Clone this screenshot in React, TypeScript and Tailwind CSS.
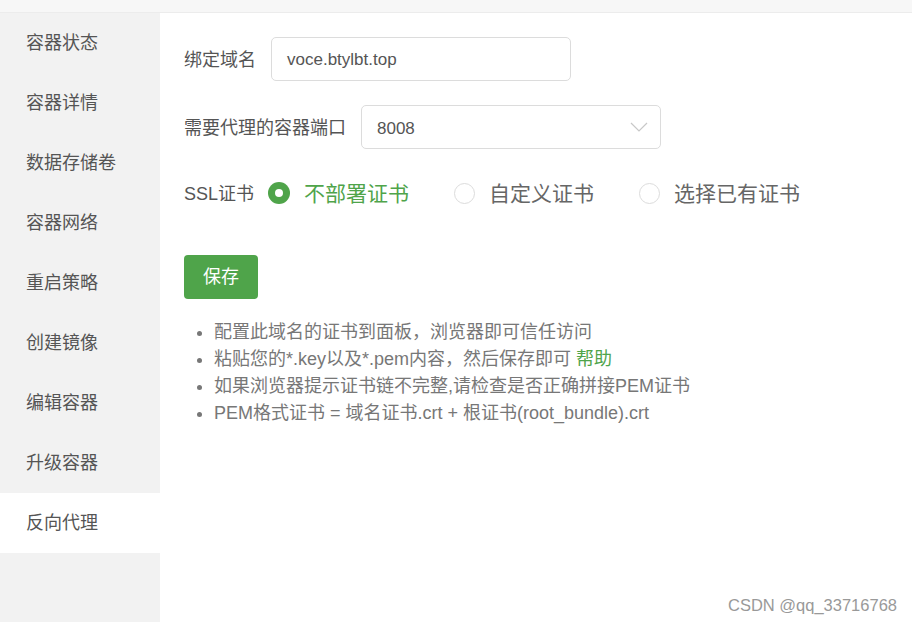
import React from "react";

const font = { fontFamily: '"Liberation Sans", "Noto Sans CJK SC", sans-serif' };

const items = ["容器状态", "容器详情", "数据存储卷", "容器网络", "重启策略", "创建镜像", "编辑容器", "升级容器", "反向代理"];

function Radio({ checked, label }: { checked?: boolean; label: string }) {
  return (
    <div className="flex items-center">
      {checked ? (
        <span className="w-[22px] h-[22px] rounded-full bg-[#4fa44a] flex items-center justify-center">
          <span className="w-[8px] h-[8px] rounded-full bg-white" />
        </span>
      ) : (
        <span className="w-[21px] h-[21px] rounded-full border border-[#dcdcdc] bg-white" />
      )}
      <span className={`ml-[14px] text-[21px] pt-[2px] ${checked ? "text-[#4fa44a]" : "text-[#666]"}`}>{label}</span>
    </div>
  );
}

export default function App() {
  return (
    <div className="w-[912px] h-[622px] bg-white flex flex-col overflow-hidden relative" style={font}>
      <div className="h-[13px] bg-[#f7f7f7] border-b border-[#ececec] shrink-0" />
      <div className="flex flex-1">
        <div className="w-[160px] bg-[#f2f2f2] flex flex-col">
          {items.map((t) => (
            <div
              key={t}
              className={`h-[60px] flex items-center pl-[26px] text-[18px] text-[#555] ${t === "反向代理" ? "bg-white" : ""}`}
            >
              {t}
            </div>
          ))}
        </div>
        <div className="flex-1 pl-[24px] pt-[24px]">
          <div className="flex items-center h-[44px]">
            <span className="text-[18px] text-[#555] w-[87px] pt-[2px]">绑定域名</span>
            <div className="w-[300px] h-[44px] border border-[#dcdcdc] rounded-[5px] flex items-center pl-[15px] pt-[2px] text-[17px] text-[#555]">
              voce.btylbt.top
            </div>
          </div>
          <div className="flex items-center h-[44px] mt-[24px]">
            <span className="text-[18px] text-[#555] w-[177px] pt-[2px]">需要代理的容器端口</span>
            <div className="w-[300px] h-[44px] border border-[#dcdcdc] rounded-[5px] flex items-center pl-[15px] pr-[12px] text-[17px] text-[#555] justify-between">
              <span className="pt-[3px]">8008</span>
              <svg width="18" height="10" viewBox="0 0 18 10" fill="none">
                <path d="M1 1 L9 9 L17 1" stroke="#c8c8c8" strokeWidth="1.2" />
              </svg>
            </div>
          </div>
          <div className="flex items-center h-[40px] mt-[24px]">
            <span className="text-[18px] text-[#555] w-[84px] pt-[2px]">SSL证书</span>
            <div className="flex items-center gap-[45px]">
              <Radio checked label="不部署证书" />
              <Radio label="自定义证书" />
              <Radio label="选择已有证书" />
            </div>
          </div>
          <button className="mt-[42px] w-[74px] h-[44px] bg-[#4fa44a] rounded-[4px] text-white text-[18px] flex items-center justify-center pt-[1px]">
            保存
          </button>
          <ul className="mt-[20px] pl-[30px] list-disc text-[18px] text-[#777] leading-[27px] marker:text-[#777]">
            <li>配置此域名的证书到面板，浏览器即可信任访问</li>
            <li>
              粘贴您的*.key以及*.pem内容，然后保存即可 <span className="text-[#4fa44a]">帮助</span>
            </li>
            <li>如果浏览器提示证书链不完整,请检查是否正确拼接PEM证书</li>
            <li>PEM格式证书 = 域名证书.crt + 根证书(root_bundle).crt</li>
          </ul>
        </div>
      </div>
      <div className="absolute right-[15px] bottom-[4px] text-[16.5px] text-[#999]" style={{ fontFamily: '"Liberation Sans", sans-serif' }}>
        CSDN @qq_33716768
      </div>
    </div>
  );
}
